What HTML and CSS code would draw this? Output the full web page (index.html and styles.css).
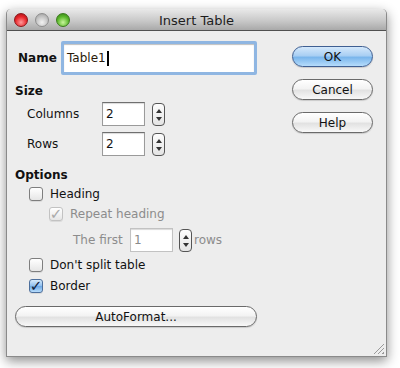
FILE: index.html
```html
<!DOCTYPE html>
<html>
<head>
    <meta name="viewport" content="width=device-width, initial-scale=1.0">
    <title>Insert Table</title>
    <link rel="stylesheet" href="styles.css">
</head>
<body>
    <div class="window">
        <div class="titlebar">
            <div class="lights">
                <span class="light red"></span>
                <span class="light grey"></span>
                <span class="light green"></span>
            </div>
            <div class="title">Insert Table</div>
        </div>

        <div class="content">
            <div class="left">
                <div class="name-row">
                    <span class="bold name-label">Name</span>
                    <div class="name-input">Table1<span class="caret"></span></div>
                </div>

                <div class="heading size-heading">Size</div>
                <div class="field-row">
                    <span class="field-label">Columns</span>
                    <div class="num-input">2</div>
                    <div class="spinner"><span class="up"></span><span class="down"></span></div>
                </div>
                <div class="field-row rows-row">
                    <span class="field-label">Rows</span>
                    <div class="num-input">2</div>
                    <div class="spinner"><span class="up"></span><span class="down"></span></div>
                </div>

                <div class="heading options-heading">Options</div>
                <div class="check-row">
                    <span class="checkbox"></span>
                    <span>Heading</span>
                </div>
                <div class="check-row indent disabled">
                    <span class="checkbox checked dim">&#10003;</span>
                    <span>Repeat heading</span>
                </div>
                <div class="first-row disabled">
                    <span class="first-label">The first</span>
                    <div class="num-input dim-input">1</div>
                    <div class="spinner"><span class="up"></span><span class="down"></span></div>
                    <span class="rows-label">rows</span>
                </div>
                <div class="check-row split-row">
                    <span class="checkbox"></span>
                    <span>Don't split table</span>
                </div>
                <div class="check-row border-row">
                    <span class="checkbox checked blue">&#10003;</span>
                    <span>Border</span>
                </div>

                <div class="button wide-button">AutoFormat...</div>
            </div>

            <div class="right">
                <div class="button default">OK</div>
                <div class="button">Cancel</div>
                <div class="button">Help</div>
            </div>
        </div>

        <div class="grip"></div>
    </div>
</body>
</html>
```

FILE: styles.css
```css
body {
    margin: 0;
    padding: 9px 13px 11px 6px;
    background-color: #fff;
    font-family: "DejaVu Sans", sans-serif;
    font-size: 12px;
    color: #111;
}

.window {
    position: relative;
    height: 348px;
    box-sizing: border-box;
    background-color: #ededed;
    border: 1px solid #8a8a8a;
    border-top: none;
    border-radius: 5px 5px 0 0;
    box-shadow: 0 4px 12px rgba(0, 0, 0, 0.45);
}

.titlebar {
    position: relative;
    height: 21px;
    background: linear-gradient(#e9e9e9, #c6c6c6 60%, #a9a9a9);
    border-bottom: 1px solid #505050;
    border-radius: 5px 5px 0 0;
    display: flex;
    align-items: center;
    justify-content: center;
}

.lights {
    position: absolute;
    left: 7px;
    top: 4px;
    display: flex;
    gap: 7px;
}

.light {
    width: 14px;
    height: 14px;
    border-radius: 50%;
    box-sizing: border-box;
}

.light.red {
    background: radial-gradient(circle at 50% 70%, #ff9a9a, #e8262a 55%, #9c0f14);
    border: 1px solid #8c1519;
}

.light.grey {
    background: radial-gradient(circle at 50% 70%, #f2f2f2, #c4c4c4 55%, #9a9a9a);
    border: 1px solid #8e8e8e;
}

.light.green {
    background: radial-gradient(circle at 50% 70%, #c9f59c, #5cb82c 55%, #2f7a12);
    border: 1px solid #3b7a1d;
}

.title {
    font-size: 13px;
    color: #1d1d1d;
    padding-top: 1px;
}

.content {
    display: flex;
    padding: 0 0 0 8px;
}

.left {
    width: 242px;
    display: flex;
    flex-direction: column;
}

.right {
    margin-left: 35px;
    padding-top: 15px;
    display: flex;
    flex-direction: column;
    gap: 12px;
}

.bold,
.heading {
    font-weight: bold;
}

.name-row {
    display: flex;
    align-items: center;
    margin-top: 10px;
    height: 34px;
}

.name-label {
    margin-left: 3px;
    width: 43px;
}

.name-input {
    width: 196px;
    height: 34px;
    box-sizing: border-box;
    background-color: #fff;
    border: 3px solid #8fb6e2;
    border-radius: 2px;
    box-shadow: inset 0 1px 1px rgba(0, 0, 0, 0.25);
    padding-left: 3px;
    display: flex;
    align-items: center;
    font-size: 12px;
    color: #2a1a0a;
}

.caret {
    display: inline-block;
    width: 2px;
    height: 15px;
    background-color: #000;
    margin-left: 1px;
}

.heading {
    height: 16px;
    line-height: 16px;
}

.size-heading {
    margin-top: 8px;
}

.field-row {
    display: flex;
    align-items: center;
    height: 24px;
    margin-top: 3px;
}

.rows-row {
    margin-top: 6px;
}

.field-label {
    margin-left: 12px;
    width: 75px;
}

.num-input {
    width: 43px;
    height: 24px;
    box-sizing: border-box;
    background-color: #fff;
    border: 1px solid #9a9a9a;
    border-top-color: #6f6f6f;
    box-shadow: inset 0 1px 1px rgba(0, 0, 0, 0.15);
    padding-left: 3px;
    display: flex;
    align-items: center;
}

.dim-input {
    color: #8a8a8a;
    border-color: #c2c2c2;
}

.spinner {
    width: 13px;
    height: 23px;
    margin-left: 7px;
    box-sizing: border-box;
    border: 1px solid #555;
    border-radius: 4px;
    background: linear-gradient(#fdfdfd, #e4e4e4);
    display: flex;
    flex-direction: column;
    align-items: center;
    justify-content: space-between;
    padding: 5px 0 4px;
}

.spinner .up,
.spinner .down {
    width: 0;
    height: 0;
    border-left: 3px solid transparent;
    border-right: 3px solid transparent;
}

.spinner .up {
    border-bottom: 4px solid #333;
}

.spinner .down {
    border-top: 4px solid #333;
}

.options-heading {
    margin-top: 11px;
}

.check-row {
    display: flex;
    align-items: center;
    height: 16px;
    margin-top: 3px;
    margin-left: 14px;
    gap: 7px;
}

.check-row.indent {
    margin-left: 34px;
    margin-top: 4px;
}

.disabled {
    color: #8c8c8c;
}

.checkbox {
    width: 14px;
    height: 14px;
    box-sizing: border-box;
    border: 1px solid #7e7e7e;
    border-radius: 3px;
    background: linear-gradient(#ffffff, #e6e6e6);
    box-shadow: 0 1px 0 rgba(0, 0, 0, 0.08);
    display: flex;
    align-items: center;
    justify-content: center;
    font-size: 15px;
    line-height: 1;
    font-weight: bold;
}

.checkbox.dim {
    border-color: #c2c2c2;
    color: #a9a9a9;
}

.checkbox.blue {
    border-color: #4d6f9c;
    background: linear-gradient(#d8ebfb, #8dbdee 50%, #6aa6e4 51%, #b7dcfb);
    color: #10203a;
}

.first-row {
    display: flex;
    align-items: center;
    height: 24px;
    margin-top: 6px;
    margin-left: 58px;
}

.first-label {
    width: 57px;
}

.first-row .spinner {
    margin-left: 6px;
}

.rows-label {
    margin-left: 2px;
}

.split-row {
    margin-top: 5px;
}

.border-row {
    margin-top: 5px;
}

.button {
    width: 81px;
    height: 21px;
    box-sizing: border-box;
    border: 1px solid #6a6a6a;
    border-radius: 11px;
    background: linear-gradient(#ffffff, #f3f3f3 45%, #e2e2e2 55%, #f8f8f8);
    display: flex;
    align-items: center;
    justify-content: center;
    font-size: 12px;
    color: #111;
    box-shadow: 0 1px 1px rgba(0, 0, 0, 0.15);
}

.button.default {
    border-color: #3f5f92;
    background: linear-gradient(#d4e8fb, #a9cff3 45%, #7ab6ec 55%, #b6dcfb);
}

.wide-button {
    width: 242px;
    margin-top: 12px;
}

.grip {
    position: absolute;
    right: 2px;
    bottom: 2px;
    width: 11px;
    height: 11px;
    background: repeating-linear-gradient(135deg, transparent 0 2px, #9a9a9a 2px 3px);
    clip-path: polygon(100% 0, 100% 100%, 0 100%);
}
```
